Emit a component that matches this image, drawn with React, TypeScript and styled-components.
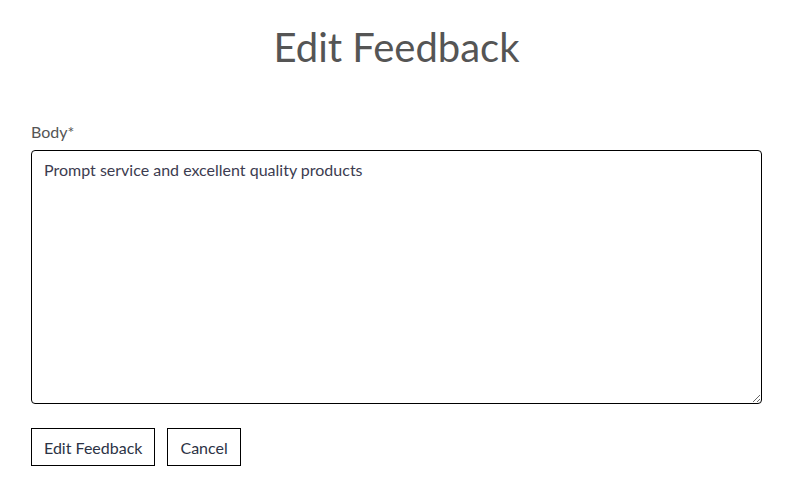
import styled, { createGlobalStyle } from "styled-components"

const GlobalStyle = createGlobalStyle`
  html, body {
    margin: 0;
    padding: 0;
    background: #fff;
    font-family: Lato, "Open Sans", sans-serif;
  }
`

const Page = styled.div`
  width: 731px;
  padding: 22px 0 0 31px;
`

const Title = styled.h1`
  margin: 0 0 50px;
  text-align: center;
  font-weight: 400;
  font-size: 40px;
  line-height: 50px;
  color: #555;
`

const Form = styled.form`
  display: flex;
  flex-direction: column;
`

const Label = styled.label`
  font-size: 16px;
  line-height: 20px;
  color: #555;
  margin-bottom: 8px;
`

const TextArea = styled.textarea`
  box-sizing: border-box;
  width: 731px;
  height: 254px;
  padding: 8px 12px;
  border: 1px solid #000;
  border-radius: 4px;
  font-family: Lato, sans-serif;
  font-size: 16px;
  line-height: 22px;
  color: #3c3c50;
  resize: vertical;
  outline: none;
`

const Actions = styled.div`
  display: flex;
  gap: 12px;
  margin-top: 24px;
`

const Button = styled.button`
  box-sizing: border-box;
  height: 38px;
  padding: 0 12px;
  border: 1px solid #000;
  border-radius: 0;
  background: #fff;
  font-family: Lato, sans-serif;
  font-size: 16px;
  color: #2c3345;
  cursor: pointer;
`

export default function App() {
  return (
    <>
      <GlobalStyle />
      <Page>
        <Title>Edit Feedback</Title>
        <Form onSubmit={e => e.preventDefault()}>
          <Label htmlFor="body">Body*</Label>
          <TextArea id="body" defaultValue="Prompt service and excellent quality products" />
          <Actions>
            <Button type="submit">Edit Feedback</Button>
            <Button type="button">Cancel</Button>
          </Actions>
        </Form>
      </Page>
    </>
  )
}
